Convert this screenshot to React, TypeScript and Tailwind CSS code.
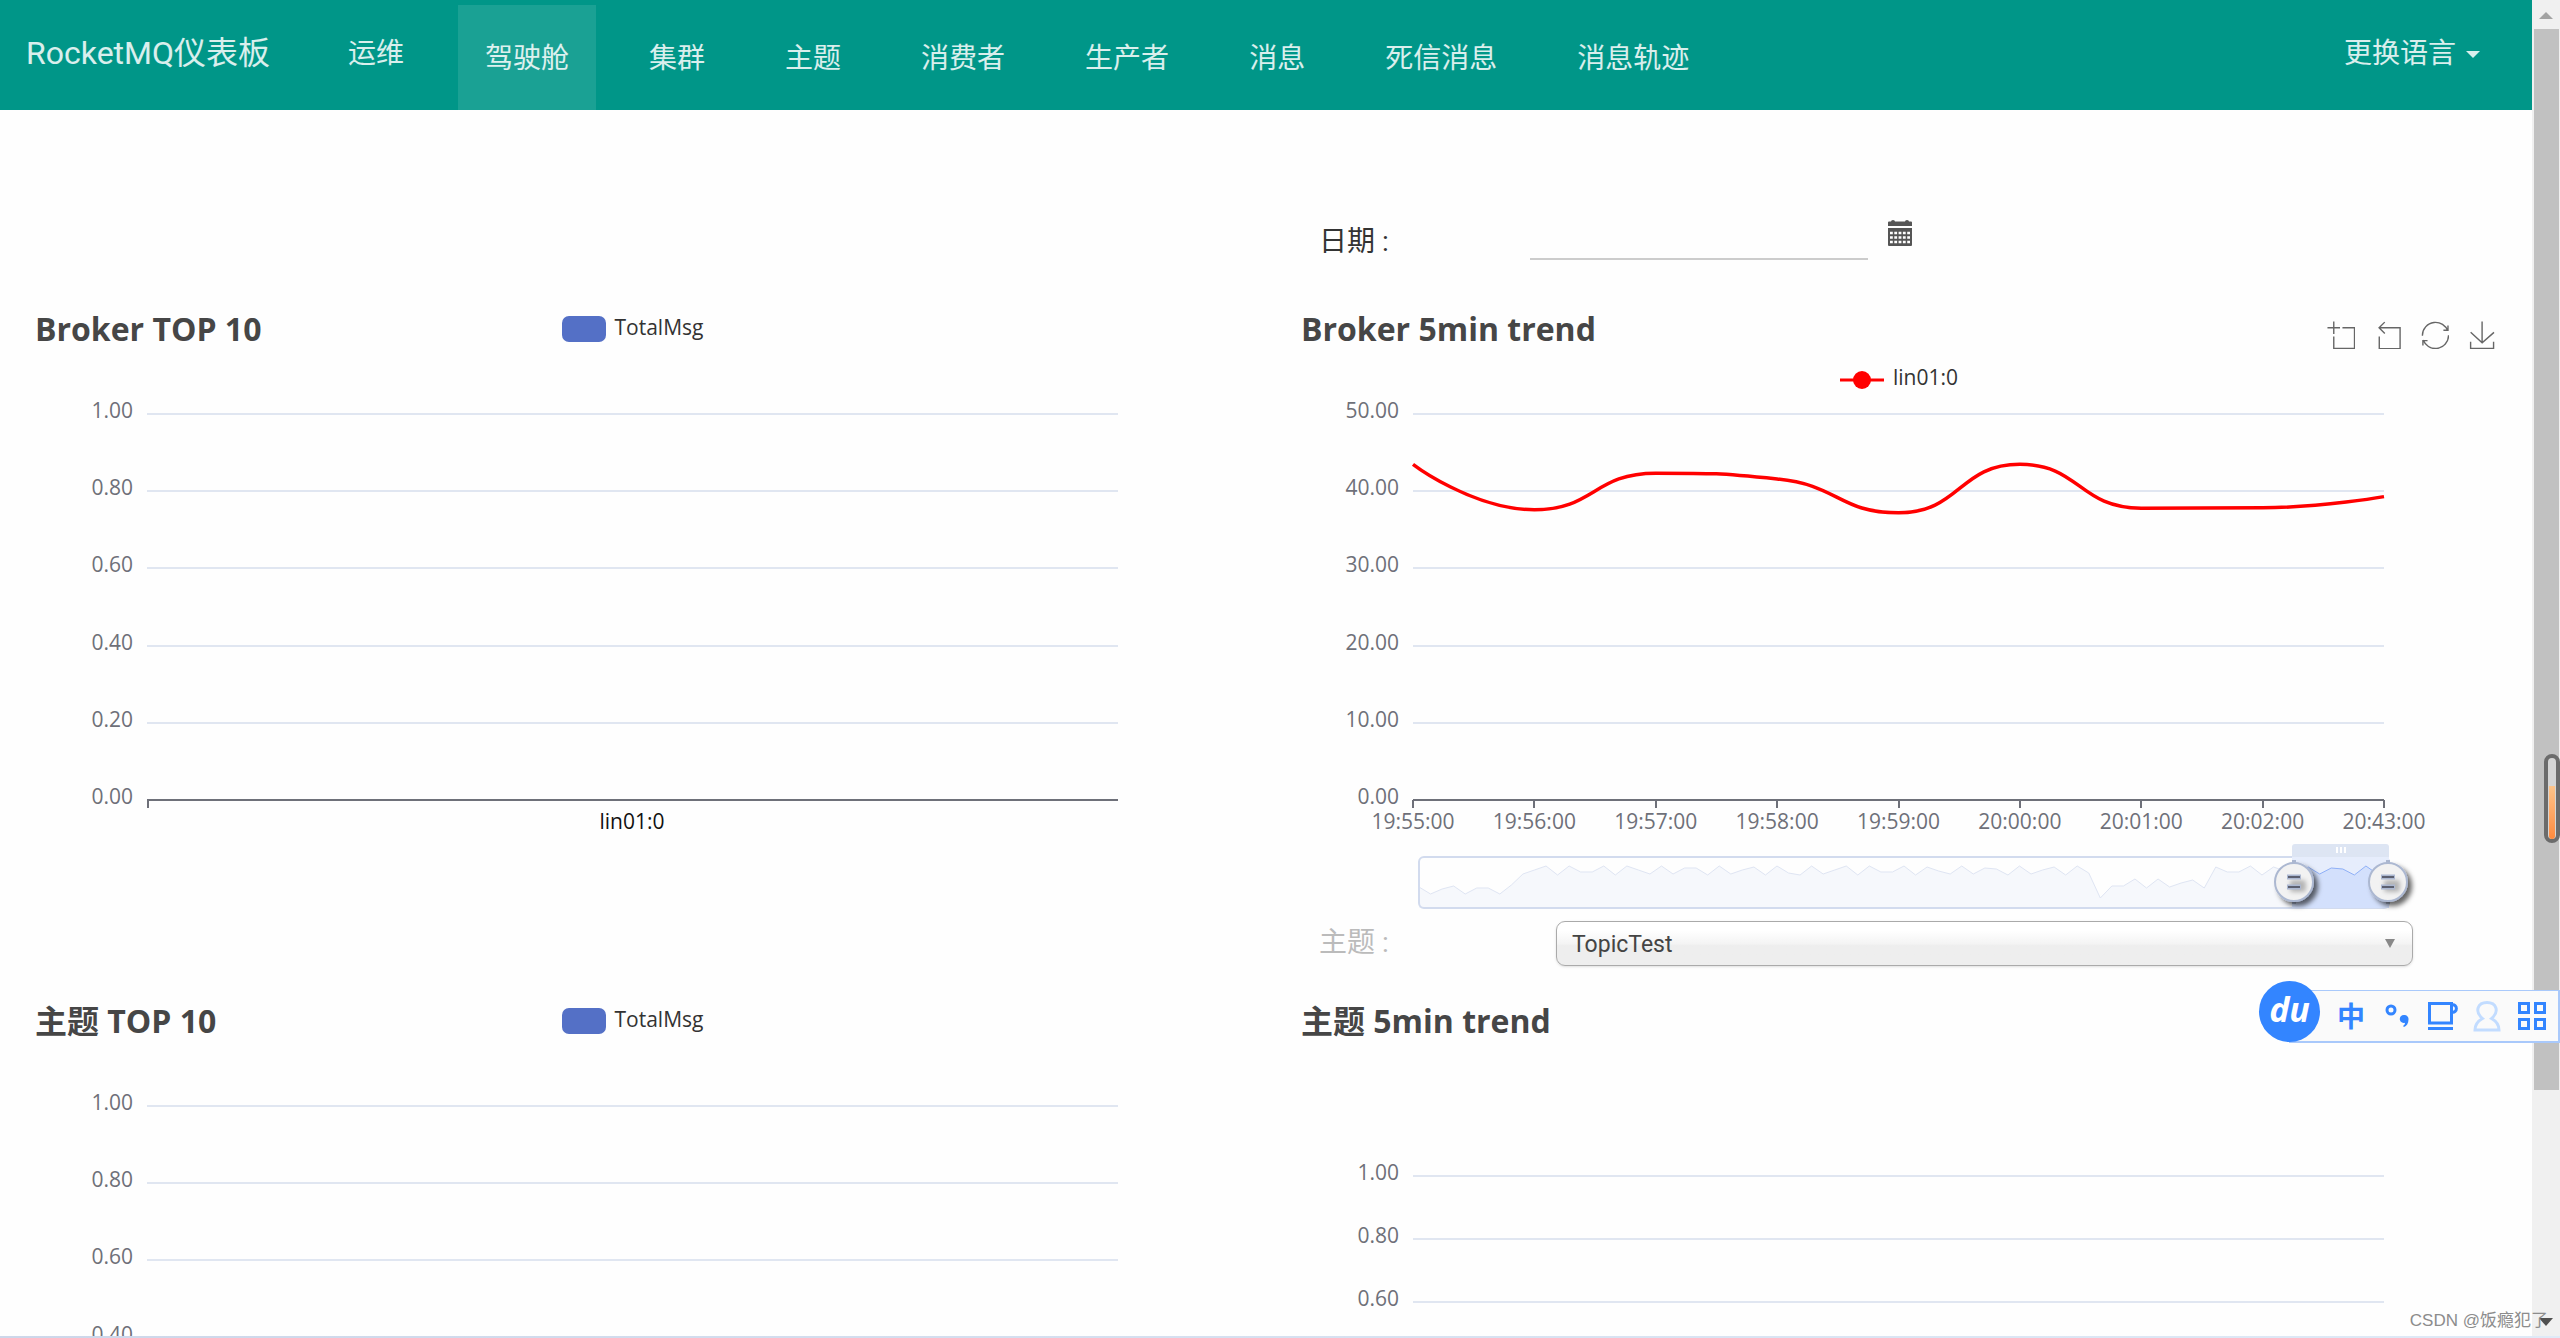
import type { ReactNode } from "react";
import clsx from "clsx";

const navItems = ["驾驶舱", "集群", "主题", "消费者", "生产者", "消息", "死信消息", "消息轨迹"];

const toolbox = [
  { label: "Zoom", d: "M0,13.5h26.9 M13.5,26.9V0 M32.1,13.5H58V58H13.5 V32.1" },
  { label: "Zoom Reset", d: "M22,1.4L9.9,13.5l12.3,12.3 M10.3,13.5H54.9v44.6 H10.3v-26" },
  {
    label: "Restore",
    d: "M47,18.9h9.8V8.7 M56.3,20.1 C52.1,9,40.5,0.6,26.8,2.1C12.6,3.7,1.6,16.2,2.1,30.6 M13,41.1H3.1v10.2 M3.7,39.9c4.2,11.1,15.8,19.5,29.5,18 c14.2-1.6,25.2-14.1,24.7-28.5",
  },
  {
    label: "Save",
    d: "M4.7,22.9L29.3,45.5L54.7,23.4M4.6,43.6L4.6,58L53.8,58L53.8,43.6M29.2,45.1L29.2,0",
  },
];

const times = [
  "19:55:00", "19:56:00", "19:57:00", "19:58:00", "19:59:00",
  "20:00:00", "20:01:00", "20:02:00", "20:43:00",
];
const trend = [43.6, 37.7, 42.45, 41.7, 37.3, 43.6, 37.9, 37.95, 39.4];

// heights of the overview line under the trend chart, in plot units
const overview = [
  487, 494, 489, 486, 494, 488, 488, 494, 485, 474, 470, 466, 475, 466, 472, 472, 466, 475, 466, 470,
  474, 466, 474, 468, 468, 475, 466, 474, 470, 467, 475, 466, 473, 475, 466, 474, 470, 466, 475, 466,
  472, 472, 466, 475, 467, 471, 474, 466, 474, 468, 469, 475, 466, 474, 470, 467, 475, 466, 473, 498,
  486, 486, 479, 488, 479, 487, 483, 480, 488, 467, 472, 472, 466, 475, 467, 471, 474, 467, 474, 468,
  469, 475, 466, 474, 474,
];

// plot area inside the 1266 wide chart
const LEFT = 147;
const RIGHT = 1118;

const between = (v: number, a: number, b: number) =>
  Math.min(Math.max(v, Math.min(a, b)), Math.max(a, b));

function smoothPath(pts: number[][]) {
  let d = `M${pts[0][0]},${pts[0][1]}`;
  let out = pts[0];
  for (let i = 1; i < pts.length; i++) {
    const [px, py] = pts[i - 1];
    const [x, y] = pts[i];
    let cin = [x, y];
    let nextOut = [x, y];
    if (i < pts.length - 1) {
      const [nx, ny] = pts[i + 1];
      const lenPrev = Math.hypot(x - px, y - py);
      const lenNext = Math.hypot(nx - x, ny - y);
      const ratio = lenNext / (lenNext + lenPrev);
      const ox = between(x + (nx - px) * 0.5 * ratio, x, nx);
      const oy = between(y + (ny - py) * 0.5 * ratio, y, ny);
      cin = [
        between(x - ((ox - x) * lenPrev) / lenNext, px, x),
        between(y - ((oy - y) * lenPrev) / lenNext, py, y),
      ];
      nextOut = [x + ((x - cin[0]) * lenNext) / lenPrev, y + ((y - cin[1]) * lenNext) / lenPrev];
    }
    d += `C${out[0]},${out[1]} ${cin[0]},${cin[1]} ${x},${y}`;
    out = nextOut;
  }
  return d;
}

interface PlotProps {
  labels: string[];
  top?: number;
  step?: number;
  children?: ReactNode;
}

function Plot({ labels, top = 14, step = 77.2, children }: PlotProps) {
  return (
    <svg viewBox="0 -10 1266 524" className="block w-full text-[21px]">
      {labels.map((label, i) => {
        const y = Math.round(top + i * step);
        const isAxis = label === "0.00";
        return (
          <g key={label}>
            <line x1={LEFT} x2={RIGHT} y1={y} y2={y} strokeWidth="2" stroke={isAxis ? "#6e7079" : "#e0e6f1"} />
            <text x="133" y={y + 4} textAnchor="end" fill="#6e7079">
              {label}
            </text>
          </g>
        );
      })}
      {children}
    </svg>
  );
}

interface ChartHeaderProps {
  title: string;
  legend?: boolean;
  tools?: boolean;
  children?: ReactNode;
}

function ChartHeader({ title, legend, tools, children }: ChartHeaderProps) {
  return (
    <header className="h-[90px]">
      <div className="grid h-[58px] grid-cols-3 items-center pr-9 pl-[35px]">
        <h2 className="text-[32px] leading-10 font-bold whitespace-nowrap text-[#464646]">{title}</h2>
        <div className="flex items-center justify-center gap-[9px]">
          {legend && (
            <>
              <span className="h-[26px] w-11 rounded-[7px] bg-[#5470c6]" />
              <span className="pb-1 text-[21px] leading-6 text-[#333]">TotalMsg</span>
            </>
          )}
        </div>
        {tools && (
          <div className="flex justify-end gap-[19px] pt-3">
            {toolbox.map((tool) => (
              <button key={tool.label} type="button" aria-label={tool.label}>
                <svg viewBox="-1 -1 60 60" className="size-7" fill="none" stroke="#666" strokeWidth="3">
                  <path d={tool.d} />
                </svg>
              </button>
            ))}
          </div>
        )}
      </div>
      {children}
    </header>
  );
}

function ZoomHandle({ x }: { x: number }) {
  return (
    <g transform={`translate(${x} 482)`}>
      <path d="M0,-22V22" stroke="#acb8d1" strokeWidth="4" />
      <circle r="19" fill="#f2f2f2" stroke="#acb8d1" strokeWidth="2" filter="url(#handle-shadow)" />
      <rect x="-4" y="-2" width="16" height="12" rx="3" fill="#000" fillOpacity="0.25" filter="url(#bar-blur)" />
      <path d="M-7,-5H7M-7,5H7" stroke="#acb8d1" strokeWidth="5" />
      <path d="M-6,-5H6M-6,5H6" stroke="#5c6070" strokeWidth="2" />
    </g>
  );
}

function DataZoom() {
  const x0 = 153;
  const width = 970;
  const pts = overview.map((y, i) => `${x0 + (i * width) / (overview.length - 1)},${y}`).join(" ");
  const area = `${x0},508 ${pts} ${x0 + width},508`;
  return (
    <g>
      <defs>
        <filter id="handle-shadow" x="-50%" y="-50%" width="220%" height="220%">
          <feDropShadow dx="4" dy="4" stdDeviation="2.5" floodColor="#000" floodOpacity="0.6" />
        </filter>
        <filter id="bar-blur" x="-50%" y="-50%" width="200%" height="200%">
          <feGaussianBlur stdDeviation="2" />
        </filter>
        <clipPath id="zoom-window">
          <rect x="1026" y="457" width="97" height="51" />
        </clipPath>
      </defs>
      <polygon points={area} fill="#f6f8fc" />
      <polyline points={pts} fill="none" stroke="#dfe5f3" strokeWidth="1" />
      <rect x={x0} y="457" width={width} height="51" rx="5" fill="none" stroke="#d2dbee" strokeWidth="2" />
      <g clipPath="url(#zoom-window)">
        <rect x="1026" y="457" width="97" height="51" fill="#e6edfc" />
        <polygon points={area} fill="#d3e0fc" />
        <polyline points={pts} fill="none" stroke="#8fb0f7" strokeWidth="1" />
      </g>
      <path d="M1026,457V447Q1026,444 1029,444H1120Q1123,444 1123,447V457Z" fill="#dde5f3" />
      <path d="M1071,447v6M1075,447v6M1079,447v6" stroke="#fff" strokeWidth="2" />
      <ZoomHandle x={1028} />
      <ZoomHandle x={1122} />
    </g>
  );
}

function TopChart({ title, category }: { title: string; category?: string }) {
  return (
    <section>
      <ChartHeader title={title} legend />
      <Plot labels={["1.00", "0.80", "0.60", "0.40", "0.20", "0.00"]}>
        <path d="M148,400v8" stroke="#6e7079" strokeWidth="2" />
        <text x="632" y="429" textAnchor="middle" fill="#111">
          {category}
        </text>
      </Plot>
    </section>
  );
}

function BrokerTrend() {
  const gap = (RIGHT - LEFT) / (times.length - 1);
  const points = trend.map((v, i) => [LEFT + i * gap, 400 - v * 7.7]);
  return (
    <section>
      <ChartHeader title="Broker 5min trend" tools>
        <div className="flex h-[31px] items-end justify-center gap-[9px]">
          <svg viewBox="0 0 44 20" className="h-5 w-11">
            <path d="M0,11H44" stroke="#f00" strokeWidth="3" />
            <circle cx="22" cy="11" r="9" fill="#f00" />
          </svg>
          <span className="text-[21px] leading-6 text-[#333]">lin01:0</span>
        </div>
      </ChartHeader>
      <Plot labels={["50.00", "40.00", "30.00", "20.00", "10.00", "0.00"]}>
        {times.map((t, i) => (
          <g key={t}>
            <path d={`M${Math.round(LEFT + i * gap)},400v8`} stroke="#6e7079" strokeWidth="2" />
            <text x={LEFT + i * gap} y="429" textAnchor="middle" fill="#6e7079">
              {t}
            </text>
          </g>
        ))}
        <path d={smoothPath(points)} fill="none" stroke="#f00" strokeWidth="3.5" />
        <DataZoom />
      </Plot>
    </section>
  );
}

function Navbar() {
  return (
    <nav className="flex h-[110px] items-start bg-[#009688] pl-[26px] font-['Roboto','Noto_Sans_CJK_SC',sans-serif] text-[28px] whitespace-nowrap text-white/85">
      <a href="#" className="flex h-[106px] items-center text-[32px]">
        RocketMQ仪表板
      </a>
      <a href="#ops" className="ml-[51px] flex h-[108px] items-center px-[27px]">
        运维
      </a>
      <ul className="ml-[27px] flex gap-[26px] pt-[5px]">
        {navItems.map((item, i) => (
          <li key={item}>
            <a
              href="#"
              className={clsx("flex h-[105px] items-center px-[27px] pt-[2px]", i === 0 && "bg-white/10")}
            >
              {item}
            </a>
          </li>
        ))}
      </ul>
      <button type="button" className="mr-[52px] ml-auto flex h-[108px] items-center gap-[10px]">
        更换语言
        <span className="border-x-[7px] border-t-[7px] border-x-transparent border-t-white/85" />
      </button>
    </nav>
  );
}

function CalendarIcon() {
  return (
    <svg viewBox="0 0 24 26" className="h-[26px] w-6">
      <path d="M0,6V2.5Q0,1.5 1,1.5H3Q3,0 5,0T7,1.5H17Q17,0 19,0T21,1.5H23Q24,1.5 24,2.5V6Z" fill="#555" />
      <path d="M0,8H24V25Q24,26 23,26H1Q0,26 0,25Z" fill="#555" />
      <path d="M2,13H22M2,17.5H22M2,22H22" stroke="#fff" strokeWidth="2.6" strokeDasharray="2.8 1.5" />
    </svg>
  );
}

function ImeBar() {
  return (
    <div className="absolute top-[981px] right-0 flex h-[62px] w-[301px] items-end">
      <div className="ml-[30px] flex h-[53px] flex-1 items-center border-2 border-t border-l-0 border-[#a9c9fb] bg-[#fafafa] pr-[11px] pl-[48px] text-[#3385ff]">
        <button type="button" className="w-7 text-[28px] leading-8 font-bold">
          中
        </button>
        <svg viewBox="0 0 24 24" className="ml-5 h-6 w-6" fill="none">
          <circle cx="6" cy="6" r="4" stroke="#3385ff" strokeWidth="3" />
          <path d="M19,11a4,4 0 0 1 4.5,4.5c0,4-2,6.5-4.5,7.5l-1-1c1.5-1 2-2 2-3.2a4,4 0 1 1-1-7.8Z" fill="#3385ff" />
        </svg>
        <svg viewBox="0 0 30 28" className="ml-[19px] h-7 w-[30px]" fill="none" stroke="#3385ff" strokeWidth="3">
          <path d="M1.5,1.5H23.5V21H1.5ZM0,26.5H25" />
          <path d="M23.5,3C30,1 30,12 23.5,10" />
        </svg>
        <svg viewBox="0 0 28 31" className="ml-[15px] h-[31px] w-7" fill="none" stroke="#c2dcff" strokeWidth="3">
          <path d="M9.5,17.5C1,10 5,1.5 14,1.5S27,10 18.5,17.5C23,20 26,24 26,29H2C2,24 5,20 9.5,17.5Z" />
        </svg>
        <svg viewBox="0 0 28 28" className="ml-[17px] size-7" fill="none" stroke="#3385ff" strokeWidth="3">
          <path d="M1.5,1.5h9v9h-9ZM17.5,1.5h9v9h-9ZM1.5,17.5h9v9h-9ZM17.5,17.5h9v9h-9Z" />
        </svg>
      </div>
      <span className="absolute top-0 left-0 flex size-[61px] items-center justify-center rounded-full bg-[#3385ff] pb-[6px] text-[34px] leading-10 font-bold text-white italic">
        du
      </span>
    </div>
  );
}

function Scrollbar() {
  return (
    <div className="flex w-7 shrink-0 flex-col items-center bg-[#f0f0f0]">
      <span className="mt-3 mb-[10px] border-x-[7px] border-b-[7px] border-x-transparent border-b-[#a3a3a3]" />
      <span className="h-[1061px] w-[25px] bg-[#c1c1c1]" />
      <span className="mt-auto mb-3 border-x-[7px] border-t-[8px] border-x-transparent border-t-[#505050]" />
    </div>
  );
}

export default function App() {
  return (
    <div className="relative flex h-screen overflow-hidden bg-[#fefefe] font-['Open_Sans','Noto_Sans_CJK_SC',sans-serif]">
      <div className="min-w-0 flex-1 overflow-hidden">
        <Navbar />

        <main className="grid grid-cols-2">
          <div className="col-start-2 flex h-[190px] items-start pt-[110px] pl-[53px] font-['Roboto','Noto_Sans_CJK_SC',sans-serif] text-[28px] text-[#333]">
            <label htmlFor="date" className="w-[211px] leading-[44px]">
              日期 :
            </label>
            <input id="date" type="text" className="h-10 w-[338px] border-b-2 border-[#ccc] bg-transparent outline-none" />
            <button type="button" aria-label="选择日期" className="ml-5">
              <CalendarIcon />
            </button>
          </div>

          <div className="col-start-1">
            <TopChart title="Broker TOP 10" category="lin01:0" />
          </div>
          <div>
            <BrokerTrend />
            <div className="flex h-[78px] items-start pt-[7px] pl-[53px] font-['Roboto','Noto_Sans_CJK_SC',sans-serif]">
              <label htmlFor="topic" className="w-[237px] text-[28px] leading-[44px] text-[#bbb]">
                主题 :
              </label>
              <div className="relative mr-[119px] flex-1">
                <select
                  id="topic"
                  className="h-[45px] w-full appearance-none rounded-[9px] border border-[#aaa] bg-linear-to-b from-white from-20% via-[#f4f4f4] via-50% to-[#eee] to-55% px-[15px] pt-1 text-[23px] text-[#444] shadow-sm"
                >
                  <option>TopicTest</option>
                </select>
                <span className="pointer-events-none absolute top-[18px] right-[18px] border-x-[5px] border-t-[9px] border-x-transparent border-t-[#888]" />
              </div>
            </div>
          </div>

          <TopChart title="主题 TOP 10" />
          <section>
            <ChartHeader title="主题 5min trend" />
            <Plot labels={["1.00", "0.80", "0.60", "0.40", "0.20", "0.00"]} top={84} step={63} />
          </section>
        </main>
      </div>

      <Scrollbar />

      <div className="absolute top-[754px] right-0 flex h-[89px] w-4 flex-col rounded-full border-4 border-[#6b6b6b] bg-[#d5d5d5]">
        <span className="mx-px mt-[28px] flex-1 rounded-b-full bg-linear-to-b from-[#fdc48a] to-[#ff8a3c]" />
      </div>
      <ImeBar />
      <span className="absolute right-3 bottom-[5px] font-['Liberation_Sans','Noto_Sans_CJK_SC',sans-serif] text-[17px] leading-6 text-[#8c8c8c]">
        CSDN @饭瘾犯了
      </span>
      <div className="absolute inset-x-0 bottom-0 h-0.5 bg-linear-to-r from-[#cdd7ea] to-[#dfeaf7]" />
    </div>
  );
}
